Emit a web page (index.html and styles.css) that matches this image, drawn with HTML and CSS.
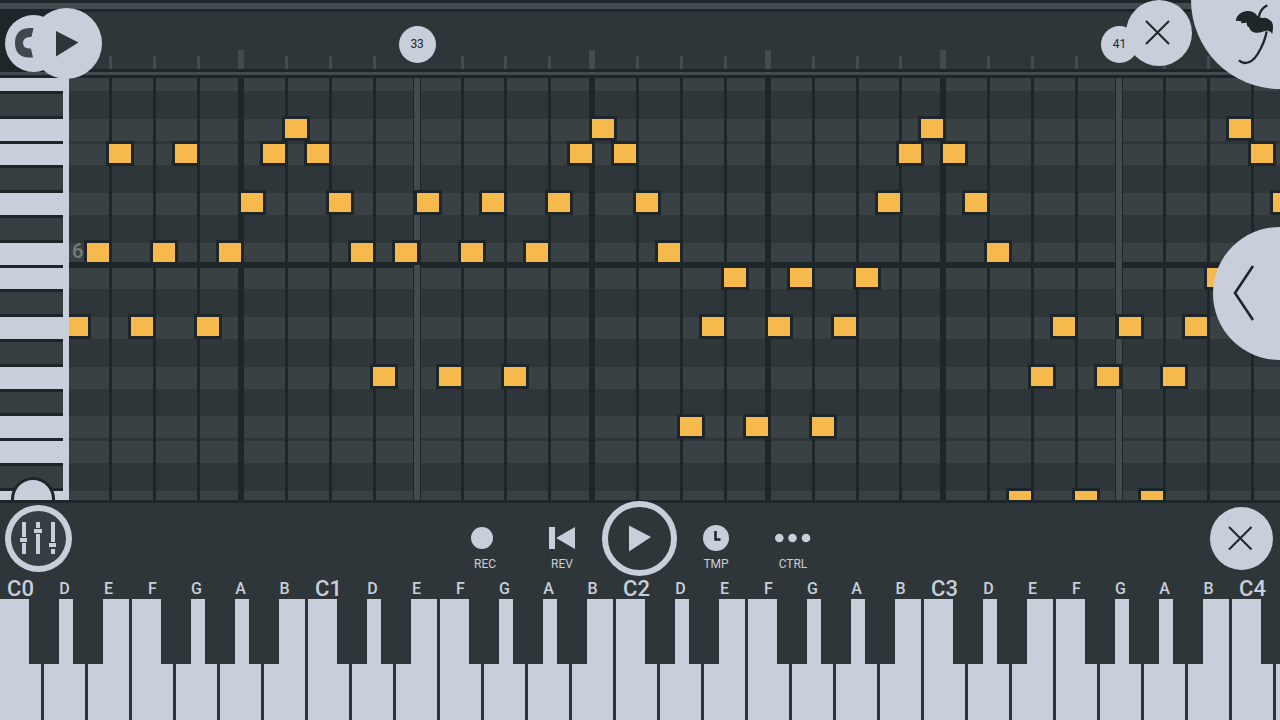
FILE: index.html
```html
<!DOCTYPE html>
<html lang="en">

<head>
    <meta charset="UTF-8">
    <meta name="viewport" content="width=device-width, initial-scale=1.0">
    <title>Piano Roll</title>
    <link rel="stylesheet" href="styles.css">
</head>

<body>
    <header class="header">
        <div class="overview"></div>
        <div class="timeline">
            <div class="corner"></div>
            <div class="ruler" id="ruler"></div>
        </div>
        <div class="scrollbar"></div>
        <button class="round snap" aria-label="Snap">
            <svg width="57" height="57" viewBox="0 0 57 57">
                <path d="M28.500 13H24Q10 14 10 28T24 42.500H28L26 33.500H24Q18 33 18 28T24 22H26.500Z" fill="#3f494d" />
            </svg>
        </button>
        <button class="round play-from" aria-label="Play from here">
            <svg width="71" height="71" viewBox="0 0 71 71">
                <path d="M25 23L47.500 34.500L25 48.500Z" fill="#2f3639" />
            </svg>
        </button>
        <button class="round close-roll" aria-label="Close piano roll">
            <svg width="66" height="66" viewBox="0 0 66 66">
                <path d="M20 21L43 44M43 21L20 44" stroke="#1f2629" stroke-width="2" />
            </svg>
        </button>
        <button class="logo" aria-label="Menu">
            <svg width="65" height="89" viewBox="0 0 195 267">
                <path d="M62 62Q66 38 94 33Q118 32 127 48Q136 56 150 53Q176 60 174 84L172 102Q162 88 150 93Q134 100 121 98Q105 95 102 81Q96 82 95 68Q86 68 78 70L80 64Z" fill="#1f2629" />
                <path d="M157 16Q137 24 131 52M155 94Q150 125 128 162Q112 189 88 189Q78 188 72 181" fill="none" stroke="#1f2629" stroke-width="7" />
            </svg>
        </button>
    </header>

    <main class="roll">
        <div class="side-keys" id="side-keys"></div>
        <div class="grid" id="grid"></div>
        <button class="handle" aria-label="Zoom keys"></button>
        <button class="drawer" aria-label="Open drawer">
            <svg width="67" height="133" viewBox="0 0 67 133">
                <path d="M40 39L22 66L40 93" fill="none" stroke="#1f2629" stroke-width="2.600" />
            </svg>
        </button>
    </main>

    <section class="toolbar">
        <button class="mixer" aria-label="Mixer">
            <svg width="67" height="67" viewBox="0 0 67 67" fill="#c8cfdb">
                <path d="M17 17h4v15h-4zM15 33h7v4h-7zM17 38h4v11h-4zM31 17h4v6h-4zM29 24h8v4h-8zM31 29h4v20h-4zM46 17h4v20h-4zM44 38h7v4h-7zM46 44h4v5h-4z" />
            </svg>
        </button>
        <div class="transport">
            <button class="tool">
                <svg width="36" height="26" viewBox="0 0 36 26">
                    <circle cx="15" cy="13" r="11" />
                </svg>
                REC
            </button>
            <button class="tool">
                <svg width="36" height="26" viewBox="0 0 36 26">
                    <path d="M5 2h6v22H5zM31 2v22L12 13z" />
                </svg>
                REV
            </button>
            <button class="play" aria-label="Play">
                <svg width="63" height="63" viewBox="0 0 63 63">
                    <path d="M21 18.500L43 30L21 44.500Z" />
                </svg>
            </button>
            <button class="tool">
                <svg width="36" height="26" viewBox="0 0 36 26">
                    <circle cx="18" cy="13" r="13" />
                    <path d="M17.500 6v8.500H22.500" fill="none" stroke="#1f2629" stroke-width="2.500" />
                </svg>
                TMP
            </button>
            <button class="tool">
                <svg width="36" height="26" viewBox="0 0 36 26">
                    <circle cx="4.300" cy="13" r="4.300" />
                    <circle cx="17.500" cy="13" r="4.300" />
                    <circle cx="31" cy="13" r="4.300" />
                </svg>
                CTRL
            </button>
        </div>
        <button class="round close-keys" aria-label="Close keyboard">
            <svg width="63" height="63" viewBox="0 0 63 63">
                <path d="M19 20L41.500 42.500M41.500 20L19 42.500" stroke="#1f2629" stroke-width="2" />
            </svg>
        </button>
    </section>

    <footer class="keyboard" id="keyboard"></footer>

    <script src="script.js"></script>
</body>

</html>
```
FILE: styles.css
```css
* {
    box-sizing: border-box;
}

body {
    margin: 0;
    height: 100vh;
    display: flex;
    flex-direction: column;
    overflow: hidden;
    background-color: #2f3639;
    color: #c8cfdb;
    font-family: Roboto, "Liberation Sans", sans-serif;
}

button {
    margin: 0;
    padding: 0;
    border: none;
    background: none;
    color: inherit;
    font: inherit;
    cursor: pointer;
}

svg {
    display: block;
}

.round {
    border-radius: 50%;
    background-color: #c8cfdb;
}

/* header */

.header {
    position: relative;
    z-index: 2;
}

.overview {
    height: 12px;
    background-color: #424b4f;
    border-top: 3px solid #1f2629;
    border-bottom: 3px solid #1f2629;
}

.timeline {
    display: flex;
    height: 57px;
}

.corner {
    width: 69px;
    background-color: #1f2629;
}

.ruler {
    position: relative;
    flex: 1;
}

.scrollbar {
    height: 9px;
    background-color: #424b4f;
    border-top: 3px solid #1f2629;
    border-bottom: 3px solid #1f2629;
}

.tick {
    position: absolute;
    bottom: 0;
    width: 3px;
    height: 13px;
    background-color: #424b4f;
}

.tick.beat {
    width: 6px;
    height: 19px;
    margin-left: -3px;
}

.marker {
    position: absolute;
    top: 14px;
    width: 37px;
    height: 37px;
    margin-left: -18px;
    border-radius: 50%;
    background-color: #c8cfdb;
    color: #1f2629;
    font-size: 12px;
    line-height: 36px;
    text-align: center;
}

.snap {
    position: absolute;
    top: 15px;
    left: 5px;
}

.play-from {
    position: absolute;
    top: 8px;
    left: 31px;
}

.close-roll {
    position: absolute;
    top: 0;
    right: 88px;
}

.logo {
    position: absolute;
    top: 0;
    right: 0;
    width: 89px;
    height: 89px;
    border-bottom-left-radius: 89px;
    background-color: #c8cfdb;
}

.logo svg {
    margin-left: auto;
}

/* piano roll */

.roll {
    position: relative;
    flex: 1;
    display: flex;
    min-height: 0;
    overflow: hidden;
}

.side-keys {
    width: 69px;
    display: grid;
    border-right: 6px solid #c8cfdb;
}

.side-key {
    border-top: 3px solid #1f2629;
    background-color: #c8cfdb;
}

.side-key.black {
    background-color: #363e42;
}

.side-key:first-child,
.lane:first-child {
    border-top: none;
}

.grid {
    position: relative;
    flex: 1;
    display: grid;
    overflow: hidden;
}

.lane {
    border-top: 3px solid #2f3639;
    background-color: #394145;
}

.lane.black {
    background-color: #2f3639;
}

.lane.c {
    border-bottom: 3px solid #1f2629;
    padding-left: 3px;
    color: #757c82;
    font-size: 20px;
    font-weight: 500;
    line-height: 16px;
}

.lane.c + .lane {
    border-top-color: #1f2629;
}

.line {
    position: absolute;
    top: 0;
    bottom: 0;
    width: 3px;
    background-color: #1f2629;
}

.line.beat {
    width: 6px;
    margin-left: -3px;
}

.line.bar {
    width: 8px;
    margin-left: -4px;
    border: 1px solid #1f2629;
    border-width: 0 1px;
    background-color: #424b4f;
}

.note {
    position: absolute;
    width: 28px;
    height: 25px;
    margin-left: -3px;
    border: 3px solid #1f2629;
    background-color: #f6b94b;
}

.handle {
    position: absolute;
    left: 11px;
    bottom: 0;
    width: 44px;
    height: 23px;
    border: 3px solid #1f2629;
    border-bottom: none;
    border-radius: 22px 22px 0 0;
    background-color: #c8cfdb;
}

.drawer {
    position: absolute;
    top: 149px;
    right: 0;
    border-radius: 67px 0 0 67px;
    background-color: #c8cfdb;
}

/* toolbar */

.toolbar {
    position: relative;
    z-index: 1;
    display: grid;
    grid-template-columns: 1fr auto 1fr;
    align-items: center;
    height: 76px;
    padding: 0 7px 0 5px;
    box-shadow: inset 0 3px #1f2629;
}

.mixer {
    justify-self: start;
    border-radius: 50%;
    background-color: #363e42;
    box-shadow: inset 0 0 0 6px #c8cfdb;
}

.transport {
    display: flex;
    align-items: center;
}

.tool {
    display: flex;
    flex-direction: column;
    align-items: center;
    width: 77px;
    padding-top: 20px;
    font-size: 12px;
    line-height: 14px;
}

.tool svg {
    margin-bottom: 6px;
    fill: #c8cfdb;
}

.play {
    margin: 0 1px;
    border: 6px solid #c8cfdb;
    border-radius: 50%;
    background-color: #2f3639;
}

.play svg {
    fill: #c8cfdb;
}

.close-keys {
    justify-self: end;
}

/* keyboard */

.keyboard {
    display: flex;
    height: 144px;
    overflow: hidden;
}

.key {
    position: relative;
    /* 44 of 1280 */
    flex: 0 0 3.4375%;
    display: flex;
    flex-direction: column;
    padding-right: 3px;
}

.key-label {
    height: 23px;
    font-size: 16px;
    font-weight: 500;
    line-height: 25px;
    text-align: center;
    white-space: nowrap;
}

.key-label.octave {
    font-size: 22px;
}

.white-key {
    flex: 1;
    background-color: #c8cfdb;
}

.black-key {
    position: absolute;
    z-index: 1;
    top: 23px;
    right: -15px;
    width: 30px;
    height: 65px;
    background-color: #2f3639;
}
```
FILE: script.js
```javascript
const STEPS = 55.18; // steps visible across the grid
const LANE = 24.8;
const ROLL = 422;

// pitches from top to bottom
const LANES = ["G", "F#", "F", "E", "D#", "D", "C#", "C", "B", "A#", "A", "G#", "G", "F#", "F", "E", "D#", "D"];

// lane of the note on each step, one note per step
const NOTES = [
    8, 5, 1, 8, 5, 1, 8, 5, 3, 1, 0, 1, 3, 5, 10, 5, 3, 10, 5, 3,
    10, 5, 3, 1, 0, 1, 3, 5, 12, 8, 6, 12, 8, 6, 12, 8, 6, 3, 1, 0,
    1, 3, 5, 15, 10, 8, 15, 10, 8, 15, 10, 8, 6, 0, 1, 3
];

function stepToLeft(step) {
    return (step / STEPS * 100) + "%";
}

function add(parent, tag, className, text) {
    const el = document.createElement(tag);
    el.className = className;
    if (text) el.textContent = text;
    parent.appendChild(el);
    return el;
}

function drawLanes() {
    const keys = document.getElementById("side-keys");
    const grid = document.getElementById("grid");
    const rows = LANES.map((name, i) => {
        // first and last lanes are cut off by the edges
        let size = LANE;
        if (i === 0) size = 13;
        if (i === LANES.length - 1) size = 12.2;
        const black = name.includes("#") ? " black" : "";
        add(keys, "button", "side-key" + black).setAttribute("aria-label", name);
        add(grid, "div", "lane" + black + (name === "C" ? " c" : ""), name === "C" ? "6" : "");
        return "minmax(0, " + size + "fr)";
    }).join(" ");
    keys.style.gridTemplateRows = rows;
    grid.style.gridTemplateRows = rows;
}

function drawLines() {
    const ruler = document.getElementById("ruler");
    const grid = document.getElementById("grid");
    for (let i = 0; i < 27; i++) {
        const left = stepToLeft(i * 2 + 1.84);
        if (i % 16 === 7) {
            add(grid, "div", "line bar").style.left = left;
            add(ruler, "div", "marker", String(33 + (i - 7) / 2)).style.left = left;
            continue;
        }
        const beat = i % 4 === 3 ? " beat" : "";
        add(grid, "div", "line" + beat).style.left = left;
        add(ruler, "div", "tick" + beat).style.left = left;
    }
}

function drawNotes() {
    const grid = document.getElementById("grid");
    NOTES.forEach((lane, i) => {
        const note = add(grid, "div", "note");
        note.style.left = stepToLeft(i - 1 + 0.84);
        note.style.top = ((38 + lane * LANE) / ROLL * 100) + "%";
    });
}

function drawKeyboard() {
    const keyboard = document.getElementById("keyboard");
    const names = ["C", "D", "E", "F", "G", "A", "B"];
    for (let i = 0; i < 30; i++) {
        const name = names[i % 7];
        const key = add(keyboard, "div", "key");
        if (name === "C") {
            add(key, "div", "key-label octave", "C" + Math.floor(i / 7));
        } else {
            add(key, "div", "key-label", i < 29 ? name : "");
        }
        add(key, "button", "white-key").setAttribute("aria-label", name);
        if (name !== "E" && name !== "B") {
            add(key, "button", "black-key").setAttribute("aria-label", name + "#");
        }
    }
}

drawLanes();
drawLines();
drawNotes();
drawKeyboard();
```
